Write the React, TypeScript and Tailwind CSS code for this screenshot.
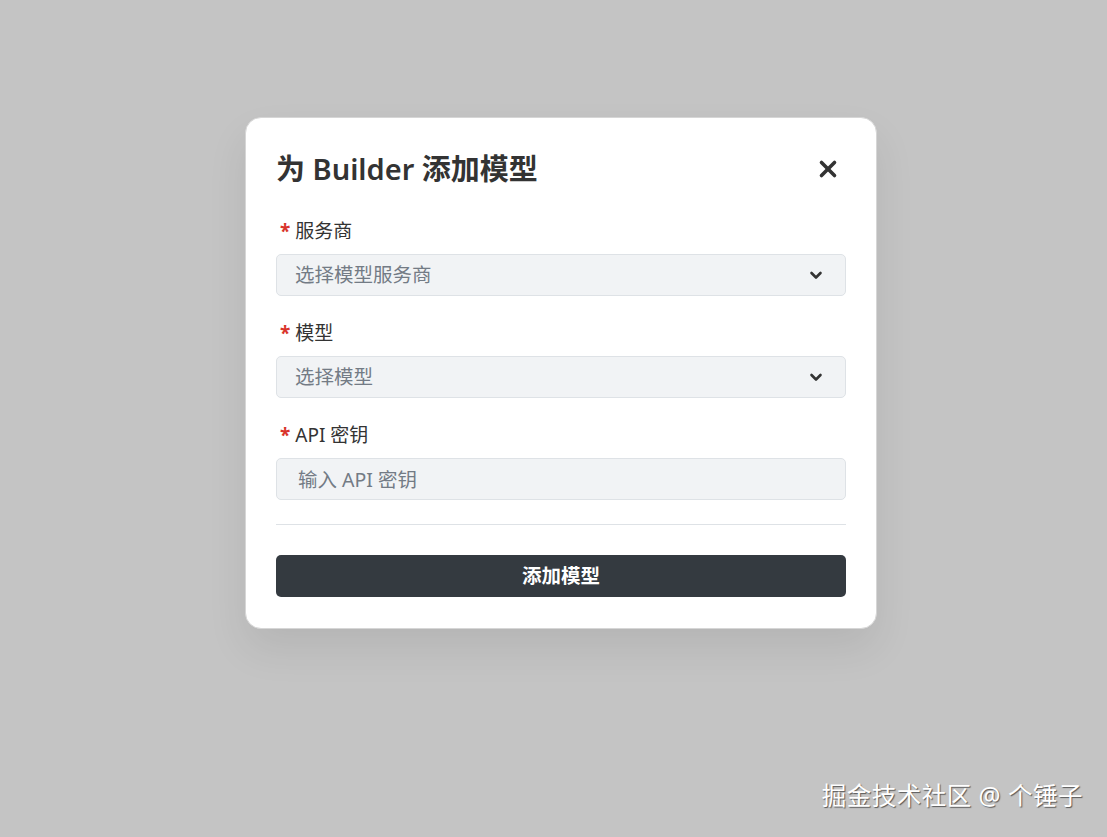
import { useState } from "react";

const fields = [
  { label: "服务商", placeholder: "选择模型服务商", type: "select" },
  { label: "模型", placeholder: "选择模型", type: "select" },
  { label: "API 密钥", placeholder: "输入 API 密钥", type: "input" },
];

export default function App() {
  const [apiKey, setApiKey] = useState("");

  return (
    <div
      className="relative h-[837px] w-full overflow-hidden bg-[#c4c4c4] text-[#333]"
      style={{ fontFamily: '"Noto Sans", "Noto Sans CJK SC", sans-serif' }}
    >
      <div className="flex justify-center pt-[117px] pl-[15px]">
        {/* Modal */}
        <div className="w-[632px] rounded-2xl border border-[#d6d6d6] bg-white px-[30px] pt-[29px] pb-[31px] shadow-[0_20px_40px_rgba(0,0,0,0.08)]">
          <div className="flex h-[44px] items-center justify-between">
            <h2 className="text-[29px] font-bold leading-[44px] text-[#333]">
              为 <span className="font-semibold">Builder</span> 添加模型
            </h2>
            <button className="mr-[8px] text-[#333]">
              <XIcon className="h-5 w-5" />
            </button>
          </div>

          <div className="mt-[28px]">
            {fields.map((f) => (
              <div key={f.label} className="mb-[25px] last:mb-0">
                <label className="mb-[11px] flex h-[24px] items-center gap-[5px] pl-[4px] text-[19px] leading-[24px] text-[#333]">
                  <span className="font-bold text-[#d9342b]">*</span>
                  {f.label}
                </label>
                {f.type === "select" ? (
                  <div className="flex h-[42px] items-center justify-between rounded-[5px] border border-[#dee2e6] bg-[#f1f3f5] pl-[18px] pr-[22px]">
                    <span className="text-[19.5px] text-[#737b85]">{f.placeholder}</span>
                    <ChevronIcon className="h-[14px] w-[14px] text-[#333]" />
                  </div>
                ) : (
                  <input
                    value={apiKey}
                    onChange={(e) => setApiKey(e.target.value)}
                    placeholder={f.placeholder}
                    className="h-[42px] w-full rounded-[5px] border border-[#dee2e6] bg-[#f1f3f5] px-[21px] text-[19.5px] text-[#333] outline-none placeholder:text-[#737b85]"
                  />
                )}
              </div>
            ))}
          </div>

          <div className="mt-[24px] border-t border-[#dee2e6]" />

          <button className="mt-[30px] flex h-[42px] w-full items-center justify-center rounded-[5px] bg-[#343a40] text-[19.5px] font-bold text-white">
            添加模型
          </button>
        </div>
      </div>

      {/* Watermark */}
      <div className="absolute right-[24px] bottom-[22px] text-[24.5px] tracking-[0.5px] text-white [text-shadow:1px_1px_1px_rgba(0,0,0,0.55)]">
        掘金技术社区 @ 个锤子
      </div>
    </div>
  );
}

function XIcon(props: { className: string }) {
  return (
    <svg {...props} viewBox="0 0 20 20" fill="none" stroke="currentColor" strokeWidth="3.6" strokeLinecap="round">
      <line x1="3.5" y1="3.5" x2="16.5" y2="16.5" />
      <line x1="16.5" y1="3.5" x2="3.5" y2="16.5" />
    </svg>
  );
}

function ChevronIcon(props: { className: string }) {
  return (
    <svg {...props} viewBox="0 0 14 14" fill="none" stroke="currentColor" strokeWidth="2.6" strokeLinecap="round" strokeLinejoin="round">
      <path d="M2.5 5 7 9.5 11.5 5" />
    </svg>
  );
}
